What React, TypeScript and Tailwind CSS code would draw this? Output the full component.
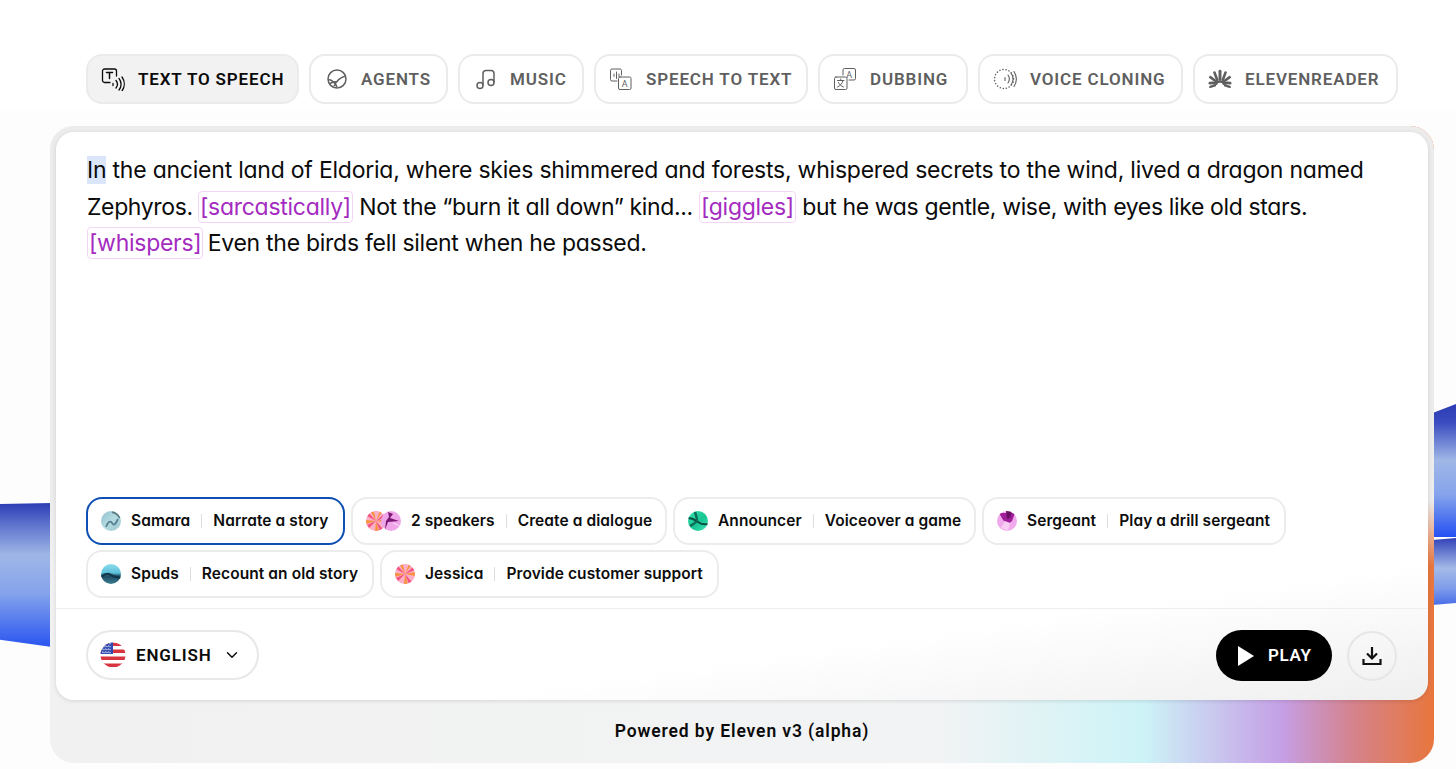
import { ChevronDown } from 'lucide-react';
import type { ReactNode } from 'react';

const tabFont = "[font-family:Roboto,sans-serif]";

const TtsIcon = () => (
  <svg width="24" height="24" viewBox="0 0 24 24" fill="none" stroke="currentColor" strokeWidth="1.3" strokeLinecap="round">
    <path d="M9 15.500H3.500a2 2 0 0 1-2-2V4a2 2 0 0 1 2-2h10a2 2 0 0 1 2 2v5" />
    <path d="M5.500 5.500h6M8.500 5.500v6" strokeWidth="1.500" />
    <path d="M12 16.500v2M15 13.500a6 6 0 0 1 0 7.500M18 11.500a9 9 0 0 1 0 11.500M21 10a12 12 0 0 1 0 14" />
  </svg>
);

const AgentsIcon = () => (
  <svg width="22" height="22" viewBox="0 0 22 22" fill="none" stroke="currentColor" strokeWidth="1.500">
    <circle cx="11" cy="11" r="9" />
    <path d="M2.500 11.500c3.500.500 6.500 3 8.500 7.500M19.500 8c-4 1-8.500 4-11.500 10M4 15.500c2.500-1.500 5-2 7-1.500" />
  </svg>
);

const MusicIcon = () => (
  <svg width="22" height="22" viewBox="0 0 22 22" fill="none" stroke="currentColor" strokeWidth="1.500">
    <circle cx="5" cy="17.500" r="3" />
    <circle cx="16" cy="14.500" r="3" />
    <path d="M8 17.500V5.500c0-2 1-3 3-3h5a3 3 0 0 1 3 3v9" />
  </svg>
);

const SpeechTextIcon = () => (
  <svg width="24" height="24" viewBox="0 0 24 24" fill="none" stroke="currentColor" strokeWidth="1" strokeLinecap="round">
    <path d="M8 14H3a1.500 1.500 0 0 1-1.500-1.500v-9A1.500 1.500 0 0 1 3 2h8a1.500 1.500 0 0 1 1.500 1.500V8" />
    <path d="M5 7v2.500M7.500 5v6.500M10 7v2.500" />
    <rect x="9.500" y="10" width="12.500" height="12.500" rx="1.500" />
    <text x="15.750" y="20" textAnchor="middle" fontSize="9" fontFamily="Roboto, sans-serif" fill="currentColor" stroke="none">A</text>
  </svg>
);

const DubbingIcon = () => (
  <svg width="24" height="24" viewBox="0 0 24 24" fill="none" stroke="currentColor" strokeWidth="1" strokeLinecap="round">
    <path d="M10 8V3a1.500 1.500 0 0 1 1.500-1.500H21A1.500 1.500 0 0 1 22.500 3v8.500A1.500 1.500 0 0 1 21 13h-5" />
    <text x="16.300" y="10.500" textAnchor="middle" fontSize="9" fontFamily="Roboto, sans-serif" fill="currentColor" stroke="none">A</text>
    <rect x="1.500" y="10" width="12.500" height="12.500" rx="1.500" />
    <path d="M4.500 13.500h6.500M7.750 12v1.500M10 13.500c-.500 3-2.500 5-5.500 6.500M5.500 15.500c.800 2 2.500 3.500 5 4.500" />
  </svg>
);

const CloningIcon = () => (
  <svg width="24" height="24" viewBox="0 0 24 24" fill="none" stroke="currentColor" strokeLinecap="round">
    <circle cx="11" cy="12" r="9.500" strokeWidth="1.500" strokeDasharray="0.100 3" />
    <path d="M12 10.500v3M15 8a7 7 0 0 1 0 8M18 6a10.500 10.500 0 0 1 0 12M21 4.500a14 14 0 0 1 0 15" strokeWidth="1.100" />
  </svg>
);

const ReaderIcon = () => (
  <svg width="26" height="20" viewBox="0 0 26 20" fill="none" stroke="currentColor" strokeLinecap="round">
    <path d="M13 1.500v9" strokeWidth="3.200" />
    <path d="M7 3l3 8M19 3l-3 8" strokeWidth="2.800" />
    <path d="M2.500 8l6 4.500M23.500 8l-6 4.500" strokeWidth="2.800" />
    <path d="M2 14.500c2.800-.500 5-.200 7 .500M24 14.500c-2.800-.500-5-.200-7 .500" strokeWidth="3" />
    <path d="M9 14c2.500-1.500 5.500-1.500 8 0" strokeWidth="2.500" />
    <path d="M2.500 18.500l5-1.500M23.500 18.500l-5-1.500" strokeWidth="2.500" />
  </svg>
);

const UsFlag = () => (
  <svg width="26" height="26" viewBox="0 0 26 26">
    <defs>
      <clipPath id="flag-clip">
        <circle cx="13" cy="13" r="12.500" />
      </clipPath>
    </defs>
    <g clipPath="url(#flag-clip)">
      <rect width="26" height="26" fill="#fff" />
      <rect y="0.500" width="26" height="3.500" fill="#d8343f" />
      <rect y="7.500" width="26" height="3.500" fill="#d8343f" />
      <rect y="14.500" width="26" height="3.500" fill="#d8343f" />
      <rect y="21.500" width="26" height="3.500" fill="#d8343f" />
      <rect width="13" height="12" fill="#2f4bb0" />
      <path d="M2 4h9M2 7h9M2 10h9M4 1v11M7 1v11M10 1v11" stroke="#fff" strokeWidth="0.900" strokeDasharray="1.200 1.800" />
    </g>
  </svg>
);

const Tab = ({ icon, label, active, className }: { icon: ReactNode; label: string; active?: boolean; className: string }) => (
  <div
    className={`flex h-[50px] items-center rounded-[16px] border-2 border-[#ebebeb] ${active ? 'bg-[#f2f2f2] text-[#0b0b0b]' : 'bg-white text-[#5f5f5f]'} ${className}`}
  >
    <span className="flex w-[24px] shrink-0 items-center justify-center">{icon}</span>
    <span className={`${tabFont} whitespace-nowrap pt-px text-[17px] font-semibold tracking-[0.05em]`}>{label}</span>
  </div>
);

const Chip = ({ avatar, name, action, selected, className }: { avatar: ReactNode; name: string; action: string; selected?: boolean; className: string }) => (
  <div
    className={`flex h-[48px] items-center rounded-[16px] pl-[13px] ${selected ? 'border-2 border-[#0f4fb3]' : 'border-2 border-[#ececec]'} ${className}`}
  >
    {avatar}
    <span className="ml-[10px] whitespace-nowrap">{name}</span>
    <span className="mx-[11px] h-[14px] w-px bg-[#dedede]" />
    <span className="whitespace-nowrap">{action}</span>
  </div>
);

const Dot = ({ bg, children }: { bg: string; children?: ReactNode }) => (
  <span className={`block h-[20px] w-[20px] shrink-0 overflow-hidden rounded-full ${bg}`}>
    {children && (
      <svg width="20" height="20" viewBox="0 0 20 20" fill="none">
        {children}
      </svg>
    )}
  </span>
);

const SamaraDot = () => (
  <Dot bg="bg-[linear-gradient(135deg,#8fc0cc_0%,#b5dbe2_50%,#9cc4ce_100%)]">
    <path d="M5 16c2-5 4-7 6-4s3 2 6-4" stroke="#55808f" strokeWidth="1.800" />
    <path d="M11 1c3 .500 6 2.500 8 6" stroke="#5f7f88" strokeWidth="2" />
  </Dot>
);

const SpudsDot = () => (
  <Dot bg="bg-[linear-gradient(180deg,#8adcec_0%,#5cc0da_45%,#1d4a60_60%,#3b7f92_100%)]">
    <path d="M0 13c4-4 7-4 10-2s6 2 10 3" stroke="#12384c" strokeWidth="2.200" />
  </Dot>
);

const JessicaDot = () => (
  <Dot bg="bg-[#f9a3c9]">
    <circle cx="10" cy="10" r="10" fill="#fbb0c8" />
    <path d="M10 10L14 0h3zM10 10L20 8v4zM10 10l3 10h-4zM10 10L0 13V9zM10 10L5 1h3z" fill="#f8923f" />
    <path d="M10 10L18 3l2 3zM10 10l7 8-3 2zM10 10l-7 7-2-3zM10 10L1 5l2-3z" fill="#f4557f" />
  </Dot>
);

const PinkDot = () => (
  <Dot bg="-ml-[5px] bg-[#efa6e8]">
    <path d="M7 1l5 2-3 4 9 3-11 1-3 8 1-9 3-4z" fill="#7c1873" />
    <path d="M12 12l7 3" stroke="#fff" strokeWidth="1" opacity="0.600" />
  </Dot>
);

const AnnouncerDot = () => (
  <Dot bg="bg-[linear-gradient(135deg,#36e4b0_0%,#18c493_55%,#3ce8b4_100%)]">
    <path d="M0 7c5 0 7 2 10 4s6 3 10 2" stroke="#0b4a40" strokeWidth="2" />
    <path d="M9 10c0-3-1-6-2-9M2 15c3-1 5-3 7-5" stroke="#0d6a58" strokeWidth="2.400" />
  </Dot>
);

const SergeantDot = () => (
  <Dot bg="bg-[#f0a9ea]">
    <path d="M2 2h16l-3 8-4 3-5-4z" fill="#a01d9a" />
    <path d="M9 0h6l-2 7-3 1z" fill="#6a0f63" />
    <path d="M8 10l5 2-2 8-7-3z" fill="#f8cdf4" />
  </Dot>
);

const Tag = ({ children, className }: { children: string; className?: string }) => (
  <span className={`rounded-[4px] border border-[#f3d6f5] px-[1px] py-[1px] tracking-[-0.012em] text-[#a42bc0] ${className ?? ''}`}>{children}</span>
);

const Blob = ({ className }: { className: string }) => <div className={`absolute ${className}`} />;

export default function App() {
  return (
    <div className="relative h-[769px] w-[1456px] overflow-hidden bg-[linear-gradient(180deg,#ffffff_0%,#ffffff_14%,#fdfdfd_15%,#fdfdfd_100%)] pt-[54px] [font-family:Inter,sans-serif]">
      <Blob className="left-0 top-[503px] h-[144px] w-[52px] bg-[linear-gradient(180deg,#2c3cb4_0%,#5a70cc_14%,#9fb6e6_36%,#86a4ec_62%,#2a55f0_100%)] [clip-path:polygon(0_1px,100%_0,100%_100%,0_95%)]" />
      <Blob className="right-0 top-[404px] h-[133px] w-[24px] bg-[linear-gradient(180deg,#2c3cb4_0%,#3a4cc0_14%,#9fb6e6_42%,#86a4ec_68%,#2450f2_100%)] [clip-path:polygon(0_7%,100%_0,100%_100%,0_100%)]" />
      <Blob className="right-0 top-[538px] h-[67px] w-[24px] bg-[linear-gradient(180deg,#3242b8_0%,#a4bae8_45%,#7f9cea_75%,#4a6ee8_100%)] [clip-path:polygon(0_3%,100%_0,100%_97%,0_100%)]" />

      <div className="relative ml-[86px] flex">
        <Tab active icon={<TtsIcon />} label="TEXT TO SPEECH" className="w-[213px] pl-[13px] [&>span:last-child]:ml-[13px]" />
        <Tab icon={<AgentsIcon />} label="AGENTS" className="ml-[10px] w-[139px] pl-[14px] [&>span:last-child]:ml-[12px]" />
        <Tab icon={<MusicIcon />} label="MUSIC" className="ml-[10px] w-[126px] pl-[14px] [&>span:last-child]:ml-[12px]" />
        <Tab icon={<SpeechTextIcon />} label="SPEECH TO TEXT" className="ml-[10px] w-[214px] pl-[13px] [&>span:last-child]:ml-[13px]" />
        <Tab icon={<DubbingIcon />} label="DUBBING" className="ml-[10px] w-[150px] pl-[13px] [&>span:last-child]:ml-[13px]" />
        <Tab icon={<CloningIcon />} label="VOICE CLONING" className="ml-[10px] w-[205px] pl-[13px] [&>span:last-child]:ml-[13px]" />
        <Tab icon={<ReaderIcon />} label="ELEVENREADER" className="ml-[10px] w-[205px] pl-[13px] [&>span:last-child]:ml-[13px]" />
      </div>

      {/* outer frame, the gradient only shows at the bottom strip and right edge */}
      <div className="relative ml-[50px] mt-[22px] h-[637px] w-[1384px] overflow-hidden rounded-[24px] bg-[linear-gradient(90deg,#f1f1f1_0%,#f2f3f4_64%,#cdf3f7_79%,#c59fe6_89%,#d4838f_94%,#e8763c_100%)]">
        <div className="absolute inset-x-0 top-0 h-[440px] bg-[linear-gradient(180deg,#ececec_0%,#ececec_85%,rgba(236,236,236,0)_100%)]" />

        <div className="relative mx-[6px] mt-[6px] flex h-[568px] flex-col rounded-[18px] bg-[linear-gradient(172deg,#ffffff_82%,#efefef_100%)] shadow-[0_1px_4px_rgba(0,0,0,0.12)]">
          <p className="h-[365px] pl-[31px] pt-[20px] text-[23px] leading-[36.500px] tracking-[-0.010em] text-[#0b0b0b] [font-feature-settings:'cv11']">
            <span className="bg-[#dbe6fa]">In</span> the ancient land of Eldoria, where skies shimmered and forests, whispered secrets to the wind, lived a dragon named
            <br />
            <span className="tracking-[-0.016em]">Zephyros.</span> <Tag className="-ml-[1px]">[sarcastically]</Tag>{' '}
            <span className="tracking-[-0.016em]">Not the “burn it all down” kind...</span> <Tag>[giggles]</Tag>{' '}
            <span className="tracking-[-0.016em]">but he was gentle, wise, with eyes like old stars.</span>
            <br />
            <Tag className="-mr-[1px]">[whispers]</Tag> <span className="-ml-[1px] tracking-[-0.012em]">Even the birds fell silent when he passed.</span>
          </p>

          <div className="flex flex-col gap-[5px] pl-[30px] text-[15.500px] font-semibold tracking-[0.005em] text-[#0d0d0d] [font-feature-settings:'cv11']">
            <div className="flex gap-[6px]">
              <Chip selected avatar={<SamaraDot />} name="Samara" action="Narrate a story" className="w-[259px]" />
              <Chip
                avatar={
                  <span className="flex">
                    <JessicaDot />
                    <PinkDot />
                  </span>
                }
                name="2 speakers"
                action="Create a dialogue"
                className="w-[316px]"
              />
              <Chip avatar={<AnnouncerDot />} name="Announcer" action="Voiceover a game" className="w-[303px]" />
              <Chip avatar={<SergeantDot />} name="Sergeant" action="Play a drill sergeant" className="w-[304px]" />
            </div>
            <div className="flex gap-[6px]">
              <Chip avatar={<SpudsDot />} name="Spuds" action="Recount an old story" className="w-[288px]" />
              <Chip avatar={<JessicaDot />} name="Jessica" action="Provide customer support" className="w-[339px]" />
            </div>
          </div>

          <div className="mt-[10px] flex h-[92px] items-start justify-between border-t border-[#eeeeee] pl-[30px] pr-[31px] pt-[21px]">
            <div className="flex h-[50px] w-[173px] items-center rounded-full border-2 border-[#e8e8e8] pl-[12px]">
              <UsFlag />
              <span className={`${tabFont} ml-[10px] pt-px text-[17px] font-semibold tracking-[0.05em] text-[#0b0b0b]`}>ENGLISH</span>
              <ChevronDown className="ml-[11px] h-[18px] w-[18px] text-[#111]" strokeWidth={2} />
            </div>
            <div className="flex items-center gap-[15px]">
              <div className="flex h-[51px] w-[116px] items-center rounded-full bg-black pl-[22px] text-white">
                <svg width="16" height="20" viewBox="0 0 16 20" fill="#fff">
                  <path d="M0 0l16 10L0 20z" />
                </svg>
                <span className={`${tabFont} ml-[14px] text-[17px] font-semibold tracking-[0.04em]`}>PLAY</span>
              </div>
              <div className="flex h-[50px] w-[50px] items-center justify-center rounded-full border-2 border-[#e6e6e6]">
                <svg width="20" height="20" viewBox="0 0 20 20" fill="none" stroke="#111" strokeWidth="2.200">
                  <path d="M10 1v11M5 7.500l5 5 5-5" />
                  <path d="M1.500 13v5h17v-5" />
                </svg>
              </div>
            </div>
          </div>
        </div>

        <div className={`${tabFont} relative flex h-[61px] items-center justify-center pt-[2px] text-[17.500px] font-semibold tracking-[0.05em] text-[#0b0b0b]`}>
          Powered by Eleven v3 (alpha)
        </div>
      </div>
    </div>
  );
}
